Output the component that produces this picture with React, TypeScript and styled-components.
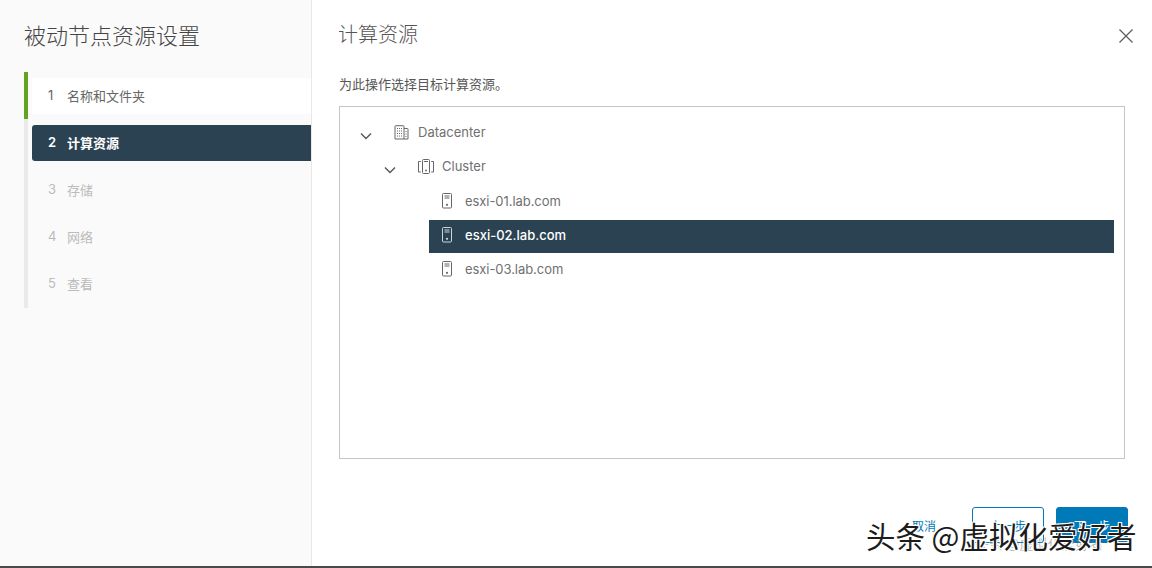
import React from "react";
import styled, { createGlobalStyle } from "styled-components";

const FONT = `Inter, "Noto Sans CJK SC", sans-serif`;

interface Step {
  num: number;
  label: string;
  state: "done" | "active" | "todo";
}

interface TreeNode {
  label: string;
  level: number;
  icon: "datacenter" | "cluster" | "host";
  expanded?: boolean;
  selected?: boolean;
}

const steps: Step[] = [
  { num: 1, label: "名称和文件夹", state: "done" },
  { num: 2, label: "计算资源", state: "active" },
  { num: 3, label: "存储", state: "todo" },
  { num: 4, label: "网络", state: "todo" },
  { num: 5, label: "查看", state: "todo" },
];

const nodes: TreeNode[] = [
  { label: "Datacenter", level: 0, icon: "datacenter", expanded: true },
  { label: "Cluster", level: 1, icon: "cluster", expanded: true },
  { label: "esxi-01.lab.com", level: 2, icon: "host" },
  { label: "esxi-02.lab.com", level: 2, icon: "host", selected: true },
  { label: "esxi-03.lab.com", level: 2, icon: "host" },
];

function NodeIcon({ icon }: { icon: TreeNode["icon"] }) {
  if (icon === "datacenter") {
    return (
      <svg width="15" height="15" viewBox="0 0 15 15" fill="none" stroke="currentColor" strokeWidth="1">
        <path d="M1 14V1.500a.8.8 0 0 1 .8-.8h7.400a.8.8 0 0 1 .8.8V14z" />
        <path d="M10 3.500h3.200a.8.8 0 0 1 .8.8V14h-4" />
        <path d="M3 3.500h1M5 3.500h1M7 3.500h1M3 6h1M5 6h1M7 6h1M3 8.500h1M5 8.500h1M7 8.500h1M3 11h1M5 11h1M7 11h1M11.500 6.500h1M11.500 9h1M11.500 11.500h1" />
      </svg>
    );
  }
  if (icon === "cluster") {
    return (
      <svg width="16" height="15" viewBox="0 0 16 15" fill="none" stroke="currentColor" strokeWidth="1">
        <rect x="4.500" y="0.500" width="7" height="14" rx="1" />
        <path d="M6 2.500h4" />
        <circle cx="8" cy="11.500" r="0.900" fill="currentColor" stroke="none" />
        <path d="M2.800 2.500H0.500v10.500h2.300M13.200 2.500h2.300v10.500h-2.300" />
      </svg>
    );
  }
  return (
    <svg width="12" height="16" viewBox="0 0 12 16" fill="none" stroke="currentColor" strokeWidth="1">
      <rect x="1.500" y="0.500" width="9" height="14.500" rx="1" />
      <path d="M3.500 3h5M3.500 5h5" />
      <circle cx="6" cy="11.800" r="1.100" fill="currentColor" stroke="none" />
    </svg>
  );
}

function Chevron() {
  return (
    <svg width="14" height="14" viewBox="0 0 14 14" fill="none" stroke="#565656" strokeWidth="1.400">
      <path d="M2 4.500l5 5 5-5" />
    </svg>
  );
}

export default function App() {
  return (
    <>
      <GlobalStyle />
      <Dialog>
        <Sidebar>
          <WizardTitle>被动节点资源设置</WizardTitle>
          <StepList>
            {steps.map((s) => (
              <StepItem key={s.num} $done={s.state === "done"}>
                <StepBody $state={s.state}>
                  <StepNum>{s.num}</StepNum>
                  {s.label}
                </StepBody>
              </StepItem>
            ))}
          </StepList>
        </Sidebar>
        <Main>
          <Header>
            <PageTitle>计算资源</PageTitle>
            <CloseButton aria-label="关闭">
              <svg width="16" height="16" viewBox="0 0 16 16" fill="none" stroke="#5f5f5f" strokeWidth="1.300">
                <path d="M1.500 1.500l13 13M14.500 1.500l-13 13" />
              </svg>
            </CloseButton>
          </Header>
          <Hint>为此操作选择目标计算资源。</Hint>
          <TreePanel>
            {nodes.map((n) => (
              <TreeRow key={n.label} $level={n.level} $selected={n.selected}>
                <Toggle $level={n.level}>{n.expanded && <Chevron />}</Toggle>
                <NodeLabel $selected={n.selected} $level={n.level}>
                  <IconSlot $selected={n.selected} $icon={n.icon}>
                    <NodeIcon icon={n.icon} />
                  </IconSlot>
                  {n.label}
                </NodeLabel>
              </TreeRow>
            ))}
          </TreePanel>
          <Footer>
            <CancelLink>取消</CancelLink>
            <OutlineButton>上一步</OutlineButton>
            <PrimaryButton>下一步</PrimaryButton>
          </Footer>
        </Main>
      </Dialog>
      <FaintMark>头条 @虚拟化爱好者</FaintMark>
      <Watermark>头条 @虚拟化爱好者</Watermark>
    </>
  );
}

const GlobalStyle = createGlobalStyle`
  html, body {
    margin: 0;
    padding: 0;
    background: #fff;
    overflow: hidden;
  }
  * {
    box-sizing: border-box;
  }
`;

const Dialog = styled.div`
  width: 1152px;
  height: 568px;
  display: flex;
  font-family: ${FONT};
  border-bottom: 2px solid #4a4a4a;
`;

const Sidebar = styled.div`
  width: 312px;
  flex: none;
  background: #fafafa;
  border-right: 1px solid #e8e8e8;
  padding: 21px 0 0 24px;
`;

const WizardTitle = styled.div`
  font-size: 22px;
  line-height: 30px;
  font-weight: 300;
  color: #444;
`;

const StepList = styled.div`
  margin-top: 21px;
  width: 287px;
  height: 236px;
  border-left: 4px solid #eaeaea;
`;

const StepItem = styled.div<{ $done?: boolean }>`
  height: 47px;
  padding: 6px 0 0 4px;
  margin-left: -4px;
  border-left: 4px solid ${(p) => (p.$done ? "#62a420" : "transparent")};
`;

const StepBody = styled.div<{ $state: Step["state"] }>`
  height: 36px;
  padding: 0 0 2px 16px;
  display: flex;
  align-items: center;
  font-size: 13px;
  font-weight: ${(p) => (p.$state === "active" ? 600 : 400)};
  border-radius: ${(p) => (p.$state === "active" ? "3px 0 0 3px" : "0")};
  color: ${(p) => (p.$state === "active" ? "#fff" : p.$state === "done" ? "#666" : "#bbb")};
  background: ${(p) => (p.$state === "active" ? "#2b4252" : p.$state === "done" ? "#fff" : "transparent")};
`;

const StepNum = styled.span`
  width: 19px;
`;

const Main = styled.div`
  flex: 1;
  min-width: 0;
  padding: 18px 27px 0;
  display: flex;
  flex-direction: column;
`;

const Header = styled.div`
  display: flex;
  align-items: center;
  justify-content: space-between;
  height: 30px;
`;

const PageTitle = styled.div`
  font-size: 20px;
  font-weight: 300;
  color: #555;
  margin-left: -1px;
`;

const CloseButton = styled.button`
  border: none;
  background: none;
  padding: 0;
  margin: 6px -9px 0 0;
  display: flex;
`;

const Hint = styled.div`
  margin-top: 26px;
  font-size: 13px;
  line-height: 20px;
  color: #565656;
`;

const TreePanel = styled.div`
  margin-top: 12px;
  height: 353px;
  border: 1px solid #c4c4c4;
  padding: 8px 10px 0 0;
`;

const TreeRow = styled.div<{ $level: number; $selected?: boolean }>`
  height: 34px;
  display: flex;
  align-items: center;
  padding-left: ${(p) => 19 + p.$level * 24}px;
  margin-bottom: ${(p) => (p.$level === 1 ? 1 : p.$selected ? -1 : 0)}px;
  margin-top: ${(p) => (p.$selected ? 1 : 0)}px;
`;

const Toggle = styled.div<{ $level: number }>`
  width: 14px;
  height: 14px;
  flex: none;
  margin: 3px ${(p) => (p.$level === 2 ? 8 : 21)}px 0 0;
`;

const NodeLabel = styled.div<{ $selected?: boolean; $level: number }>`
  flex: 1;
  align-self: flex-end;
  height: ${(p) => (p.$selected ? "33px" : "34px")};
  display: flex;
  align-items: center;
  padding-left: ${(p) => (p.$level === 2 ? 12 : 0)}px;
  padding-bottom: ${(p) => (p.$selected ? 3 : 0)}px;
  font-size: 13px;
  letter-spacing: ${(p) => (p.$level === 2 && !p.$selected ? "-0.06px" : "0")};
  color: ${(p) => (p.$selected ? "#fff" : "#707070")};
  font-weight: ${(p) => (p.$selected ? 450 : 400)};
  background: ${(p) => (p.$selected ? "#2b4252" : "transparent")};
`;

const IconSlot = styled.span<{ $selected?: boolean; $icon: TreeNode["icon"] }>`
  display: flex;
  margin-right: ${(p) => (p.$icon === "host" ? 12 : p.$icon === "cluster" ? 8 : 9)}px;
  color: ${(p) => (p.$selected ? "#c9d6de" : "#666")};
`;

const Footer = styled.div`
  margin-top: 48px;
  display: flex;
  justify-content: flex-end;
  align-items: center;
  gap: 12px;
  margin-right: -3px;
`;

const CancelLink = styled.button`
  border: none;
  background: none;
  color: #0079b8;
  font-family: ${FONT};
  font-size: 12px;
  padding: 0;
  margin-right: 24px;
`;

const OutlineButton = styled.button`
  width: 72px;
  height: 36px;
  border: 1px solid #0079b8;
  border-radius: 3px;
  background: #fff;
  color: #0079b8;
  font-family: ${FONT};
  font-size: 12px;
`;

const PrimaryButton = styled(OutlineButton)`
  background: #0079b8;
  color: #fff;
`;

const Watermark = styled.div`
  position: absolute;
  left: 866px;
  top: 516px;
  font-family: "Noto Sans CJK SC", sans-serif;
  font-size: 29.500px;
  line-height: 38px;
  white-space: nowrap;
  color: #1c1c1c;
  text-shadow: 1px 1px 0 #fff, -1px -1px 0 #fff, 1px -1px 0 #fff, -1px 1px 0 #fff;
`;

const FaintMark = styled.div`
  position: absolute;
  left: 975px;
  top: 533px;
  font-family: "Noto Sans CJK SC", sans-serif;
  font-size: 14px;
  color: rgba(120, 120, 120, 0.5);
  white-space: nowrap;
`;
